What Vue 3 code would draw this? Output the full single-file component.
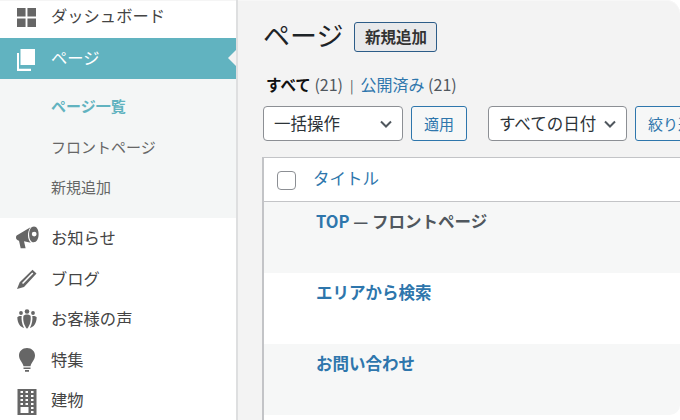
<script setup>
const subItems = [
  { label: 'ページ一覧', current: true },
  { label: 'フロントページ' },
  { label: '新規追加' }
]
const rows = [
  { title: 'TOP', state: 'フロントページ' },
  { title: 'エリアから検索' },
  { title: 'お問い合わせ' }
]
</script>

<template>
  <div class="screen">
    <aside class="sidebar">
      <div class="item first">
        <svg class="icon grid" viewBox="0 0 20 20"><path d="M0 0h9v9H0zM11 0h9v9h-9zM0 11h9v9H0zM11 11h9v9h-9z" /></svg>
        <span>ダッシュボード</span>
      </div>
      <div class="item active">
        <svg class="icon pages" viewBox="0 0 18 22">
          <path d="M3.500 0H18v16H3.500z" />
          <path d="M0 4h2v15.800h12V22H0z" />
        </svg>
        <span>ページ</span>
        <i class="notch"></i>
      </div>
      <div class="submenu">
        <div v-for="sub in subItems" :key="sub.label" class="sub-item" :class="{ current: sub.current }">{{ sub.label }}</div>
      </div>
      <div class="item">
        <svg class="icon megaphone" viewBox="0 0 24 24">
          <path d="M1 11.500c0-1.500 1-2.500 2.300-2.900L15.500 1.300c-2 2.800-2.600 5.700-2.500 8.500.1 2.600 1 5 2.800 7L9 15.300l1.600 7H5.700L4 14.700C2.200 14.300 1 13.200 1 11.500z" />
          <path fill-rule="evenodd" d="M19 .6c2.800 0 4.600 3.200 4.600 7.700s-2 8-5 8c-2.700 0-4.500-3.400-4.500-7.800S16 .6 19 .6zm.2 5.100a2.400 2.400 0 1 0 0 4.800 2.400 2.400 0 0 0 0-4.800z" />
        </svg>
        <span>お知らせ</span>
      </div>
      <div class="item">
        <svg class="icon" viewBox="0 0 20 20">
          <path fill-rule="evenodd" d="M15.500.8l4 3.700L7 18 0 20l2.700-6.800zM15.200 3.400L5 14l1.100 1.100L16.400 4.600z" />
        </svg>
        <span>ブログ</span>
      </div>
      <div class="item">
        <svg class="icon" viewBox="0 0 20 20">
          <circle cx="4" cy="4" r="1.900" />
          <circle cx="10" cy="2.500" r="2.300" />
          <circle cx="16" cy="4" r="1.900" />
          <path d="M6.500 6.800C7.500 5.900 8.700 5.500 10 5.500s2.500.4 3.500 1.300c.8 3.800-.3 9.700-3.500 13C6.800 16.500 5.700 10.600 6.500 6.800z" />
          <path d="M4.700 7c-.5 3.500.2 8 2.400 12C3.500 18.300.5 14.500.3 8.300 1.200 7.300 2.800 6.800 4.700 7z" />
          <path d="M15.300 7c.5 3.500-.2 8-2.400 12 3.600-.7 6.600-4.500 6.800-10.700-.9-1-2.500-1.500-4.400-1.300z" />
        </svg>
        <span>お客様の声</span>
      </div>
      <div class="item">
        <svg class="icon bulb" viewBox="0 0 20 24">
          <path d="M10 0c4.600 0 8 3.300 8 7.600 0 4.300-3.600 6.700-4.500 10.600h-7C5.600 14.300 2 11.900 2 7.600 2 3.300 5.400 0 10 0z" />
          <path d="M6.500 19.500h7v1.600h-7zM8 22h4v1.800H8z" />
        </svg>
        <span>特集</span>
      </div>
      <div class="item">
        <svg class="icon building" viewBox="0 0 19 26">
          <path fill-rule="evenodd" d="M0 0h19v26H0zM3 2v2h2.500V2zM8 2v2h2.500V2zM13.500 2v2H16V2zM3 6v2h2.500V6zM8 6v2h2.500V6zM13.500 6v2H16V6zM3 10v2h2.500v-2zM8 10v2h2.500v-2zM13.500 10v2H16v-2zM3 14v2h2.500v-2zM8 14v2h2.500v-2zM13.500 14v2H16v-2zM3 18v6h8v-6zM13.500 18v2H16v-2zM13.500 22v2H16v-2z" />
        </svg>
        <span>建物</span>
      </div>
    </aside>

    <main class="main">
      <div class="heading">
        <h1>ページ</h1>
        <button class="add-new">新規追加</button>
      </div>
      <div class="subsub">
        <b>すべて</b> <span class="count">(21)</span>
        <span class="sep">|</span>
        <a>公開済み</a> <span class="count">(21)</span>
      </div>
      <div class="filters">
        <div class="select bulk">
          <span>一括操作</span>
          <svg class="chevron" viewBox="0 0 12 8"><path d="M1 1.500l5 5 5-5" /></svg>
        </div>
        <button class="action">適用</button>
        <div class="select dates">
          <span>すべての日付</span>
          <svg class="chevron" viewBox="0 0 12 8"><path d="M1 1.500l5 5 5-5" /></svg>
        </div>
        <button class="action narrow">絞り込み</button>
      </div>
      <div class="table">
        <div class="table-head">
          <span class="checkbox"></span>
          <a>タイトル</a>
        </div>
        <div v-for="row in rows" :key="row.title" class="row">
          <a>{{ row.title }}</a>
          <span v-if="row.state" class="state"> — {{ row.state }}</span>
        </div>
      </div>
    </main>
  </div>
</template>

<style scoped>
.screen {
  display: flex;
  width: 680px;
  height: 420px;
  overflow: hidden;
  background: #fff;
  font-family: "Noto Sans CJK JP", "Liberation Sans", sans-serif;
}

.sidebar {
  flex: 0 0 236px;
  border-right: 2px solid #dedfe0;
  background: #fff;
  box-shadow: inset 0 1px 0 #f5f5f5;
}

.item {
  position: relative;
  display: flex;
  align-items: center;
  gap: 14px;
  height: 40.6px;
  padding-left: 17px;
  font-size: 16.300px;
  color: #444;
}

.item span {
  margin-bottom: 2px;
}

.item.first {
  height: 37px;
  padding-bottom: 2px;
  box-sizing: border-box;
}

.item.first span {
  margin-bottom: 5px;
}

.item.active {
  height: 41px;
  margin-top: 1px;
  background: #61b3c0;
  color: #fff;
}

.item.active span {
  margin-bottom: 4px;
}

.icon {
  flex: 0 0 20px;
  width: 20px;
  height: 20px;
  fill: #666;
}

.active .icon {
  fill: #fff;
}

.grid {
  flex-basis: 19px;
  width: 19px;
  height: 19px;
  margin-right: 1px;
}

.pages {
  flex-basis: 18px;
  width: 18px;
  height: 22px;
  margin-top: 3px;
  margin-right: 2px;
}

.megaphone {
  flex-basis: 24px;
  width: 24px;
  height: 24px;
  margin-left: -2px;
  margin-right: -2px;
}

.bulb {
  height: 24px;
}

.building {
  height: 26px;
  margin-top: 3px;
}

.notch {
  position: absolute;
  right: 0;
  top: 12px;
  border: 8px solid transparent;
  border-left: 0;
  border-right-color: #f3f3f3;
}

.submenu {
  padding: 7px 0 10px;
  background: #f4f6f6;
}

.sub-item {
  height: 40.6px;
  line-height: 40.6px;
  padding-left: 51px;
  font-size: 15px;
  color: #666;
}

.sub-item.current {
  font-weight: 700;
  color: #61b3c0;
}

.main {
  flex: 1;
  min-width: 0;
  display: flex;
  flex-direction: column;
  padding-left: 25px;
  background: #f3f3f3;
  border-top-right-radius: 14px;
  box-shadow: inset 0 1px 0 #f7f7f7;
}

.heading {
  display: flex;
  align-items: center;
  gap: 11px;
  height: 30px;
  margin-top: 22px;
}

h1 {
  margin: -4px 0 0;
  font-size: 27px;
  font-weight: 400;
  line-height: 30px;
  color: #1d2327;
}

.add-new {
  width: 83px;
  height: 30px;
  padding: 0 0 2px;
  border: 1px solid #2c5c88;
  border-radius: 3px;
  background: #e8e9eb;
  font: 700 15.500px "Noto Sans CJK JP", sans-serif;
  color: #333;
}

.subsub {
  margin-top: 21px;
  height: 22px;
  line-height: 22px;
  padding-left: 3px;
  font-size: 16px;
  color: #50575e;
  white-space: nowrap;
}

.subsub b {
  font-size: 15.500px;
  color: #111;
}

.subsub a,
.table-head a,
.row a {
  color: #2e76ac;
}

.sep {
  margin: 0 7px;
  font-size: 13px;
}

.filters {
  display: flex;
  margin-top: 11px;
  height: 35px;
}

.select {
  display: flex;
  align-items: center;
  justify-content: space-between;
  box-sizing: border-box;
  height: 35px;
  border: 1px solid #8c8f94;
  border-radius: 4px;
  background: #fff;
  font-size: 16.500px;
  color: #2c3338;
}

.select span {
  margin-bottom: 2px;
}

.bulk {
  flex: 0 0 140px;
  padding: 0 10px;
}

.dates {
  flex: 0 0 139px;
  margin-left: 21px;
  padding: 0 10px;
  white-space: nowrap;
}

.chevron {
  flex: none;
  width: 12px;
  height: 8px;
  fill: none;
  stroke: #50575e;
  stroke-width: 2;
}

.action {
  flex: 0 0 56px;
  box-sizing: border-box;
  height: 35px;
  margin-left: 8px;
  padding: 0;
  border: 1px solid #2e76ac;
  border-radius: 3px;
  background: #f6f7f7;
  font: 400 15px "Noto Sans CJK JP", sans-serif;
  color: #2e76ac;
  white-space: nowrap;
}

.narrow {
  flex-basis: 80px;
  padding-left: 12px;
  text-align: left;
}

.table {
  flex: 1;
  margin-top: 16px;
  margin-left: -1px;
  border-left: 2px solid #c3c4c7;
  border-top: 1px solid #c3c4c7;
  background: #fff;
}

.table-head {
  display: flex;
  align-items: center;
  gap: 17px;
  box-sizing: border-box;
  height: 44px;
  padding-left: 13px;
  border-bottom: 1px solid #c3c4c7;
  font-size: 16.500px;
}

.table-head a {
  margin-bottom: 4px;
}

.checkbox {
  box-sizing: border-box;
  width: 19px;
  height: 19px;
  border: 1px solid #8c8f94;
  border-radius: 4px;
  margin-top: 1px;
}

.row {
  box-sizing: border-box;
  height: 71px;
  padding: 7px 0 0 52px;
  font-size: 16.500px;
  font-weight: 700;
  line-height: 24px;
}

.row:nth-child(even) {
  background: #f6f7f7;
}

.row:last-child {
  border-bottom-right-radius: 10px;
}

.state {
  color: #50575e;
}
</style>

<style>
body {
  background: #fff;
}
</style>
